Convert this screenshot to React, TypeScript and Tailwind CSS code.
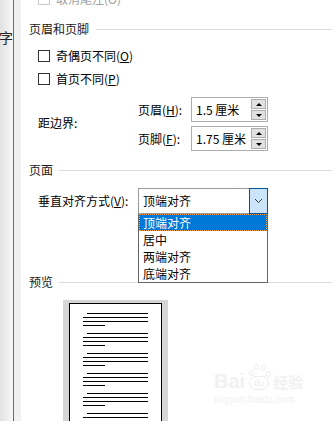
import React from "react";

function Check({ disabled }: { disabled?: boolean }) {
  return (
    <div
      className={
        "w-[12px] h-[12px] border bg-white shrink-0 " +
        (disabled ? "border-[#c8c8c8]" : "border-[#333333]")
      }
    />
  );
}

function Header({ text, gap }: { text: string; gap: string }) {
  return (
    <div className="h-[16px] flex items-center pl-[8px]">
      <span className="text-[12px] leading-[16px] text-[#1a1a1a]">{text}</span>
      <div className={"flex-1 h-px bg-[#dcdcdc] " + gap} />
    </div>
  );
}

function Spin({ value }: { value: string }) {
  return (
    <div className="w-[77px] h-[25px] border border-[#adadad] bg-white flex items-center">
      <span className="flex-1 pl-[4px] text-[12px] leading-[16px] text-black">{value}</span>
      <div className="flex flex-col gap-[1px] mr-[1px]">
        <div className="w-[15px] h-[10px] bg-[#e1e1e1] border border-[#adadad] flex items-center justify-center">
          <div className="w-0 h-0 border-l-[3px] border-r-[3px] border-b-[3px] border-l-transparent border-r-transparent border-b-black" />
        </div>
        <div className="w-[15px] h-[10px] bg-[#e1e1e1] border border-[#adadad] flex items-center justify-center">
          <div className="w-0 h-0 border-l-[3px] border-r-[3px] border-t-[3px] border-l-transparent border-r-transparent border-t-black" />
        </div>
      </div>
    </div>
  );
}

function Group() {
  return (
    <div className="flex flex-col gap-[3px]">
      <div className="h-px bg-black ml-[4px]" />
      <div className="h-px bg-black" />
      <div className="h-px bg-black" />
      <div className="h-px bg-black w-[22px]" />
    </div>
  );
}

export default function App() {
  return (
    <div className="w-[332px] h-[421px] overflow-hidden flex bg-white relative font-['Noto_Sans_CJK_SC','Liberation_Sans',sans-serif] text-[12px]">
      <div className="w-[13px] h-full bg-gradient-to-r from-[#e2e2e2] to-[#f7f7f7] shrink-0" />
      <div className="w-px h-full bg-[#6a6a6a] shrink-0" />
      <div className="w-[7px] h-full bg-[#f0f0f0] shrink-0" />
      <span className="absolute left-[-1px] top-[29px] text-[14px] leading-[16px] text-[#222]">字</span>

      <div className="flex-1 flex flex-col relative">
        {/* partial top row */}
        <div className="h-[14px] mt-[-8px] flex items-center gap-[6px] pl-[17px]">
          <Check disabled />
          <span className="text-[12px] leading-[14px] text-[#a0a0a0]">取消尾注(O)</span>
        </div>

        <div className="mt-[15px]">
          <Header text="页眉和页脚" gap="ml-[7px]" />
        </div>

        <div className="mt-[11px] h-[16px] flex items-center gap-[6px] pl-[17px]">
          <Check />
          <span className="leading-[16px] text-black">
            奇偶页不同(<span className="underline">O</span>)
          </span>
        </div>
        <div className="mt-[7px] h-[16px] flex items-center gap-[6px] pl-[17px]">
          <Check />
          <span className="leading-[16px] text-black">
            首页不同(<span className="underline">P</span>)
          </span>
        </div>

        <div className="mt-[10px] flex items-center">
          <span className="w-[117px] pl-[17px] pb-[3px] leading-[16px] text-black">距边界:</span>
          <div className="flex flex-col gap-[4px]">
            <div className="flex items-center">
              <span className="w-[53px] leading-[16px] text-black">
                页眉(<span className="underline">H</span>):
              </span>
              <Spin value="1.5 厘米" />
            </div>
            <div className="flex items-center">
              <span className="w-[53px] leading-[16px] text-black">
                页脚(<span className="underline">F</span>):
              </span>
              <Spin value="1.75 厘米" />
            </div>
          </div>
        </div>

        <div className="mt-[11px]">
          <Header text="页面" gap="ml-[6px]" />
        </div>

        <div className="mt-[10px] h-[26px] flex items-center relative">
          <span className="w-[117px] pl-[17px] leading-[16px] text-black">
            垂直对齐方式(<span className="underline">V</span>):
          </span>
          <div className="relative w-[130px] h-[26px]">
            <div className="w-full h-full border border-[#9a9a9a] bg-white flex items-center">
              <span className="flex-1 pl-[4px] leading-[16px] text-black">顶端对齐</span>
              <div className="w-[19px] h-[26px] -my-px -mr-px bg-[#cce4f7] border border-[#005499] flex items-center justify-center">
                <svg width="9" height="6" viewBox="0 0 9 6">
                  <path d="M1 1 L4.5 4.5 L8 1" fill="none" stroke="#3a3a3a" strokeWidth="1" />
                </svg>
              </div>
            </div>
            <div className="absolute left-0 top-[26px] w-[130px] bg-white border-x border-b border-[#646464] z-10 flex flex-col">
              <div className="h-[17px] bg-[#0078d7] border border-dotted border-[#f5a040] flex items-center pl-[3px] text-white leading-[15px]">
                顶端对齐
              </div>
              <div className="h-[17px] flex items-center pl-[4px] text-black leading-[16px]">居中</div>
              <div className="h-[17px] flex items-center pl-[4px] text-black leading-[16px]">两端对齐</div>
              <div className="h-[17px] flex items-center pl-[4px] text-black leading-[16px]">底端对齐</div>
            </div>
          </div>
        </div>

        <div className="mt-[60px]">
          <Header text="预览" gap="ml-[6px]" />
        </div>

        <div className="mt-[10px] ml-[42px] w-[105px] h-[200px] bg-[#d6d6d6] px-[6px] pt-[3px]">
          <div className="h-full bg-white border border-black px-[13px] pt-[9px] flex flex-col gap-[7px]">
            <Group />
            <Group />
            <Group />
            <Group />
            <Group />
            <Group />
          </div>
        </div>

        {/* watermark */}
        <div className="absolute left-[193px] top-[364px] flex flex-col items-start pointer-events-none">
          <div className="flex items-end gap-[1px]">
            <span className="text-[20px] leading-[22px] font-bold text-[#f1f1f1] font-['Liberation_Sans',sans-serif]">Bai</span>
            <div className="relative w-[26px] h-[28px]">
              <div className="absolute left-[8px] top-0 w-[5px] h-[6px] rounded-full border border-[#ececec]" />
              <div className="absolute left-[15px] top-[1px] w-[5px] h-[6px] rounded-full border border-[#ececec]" />
              <div className="absolute left-[3px] top-[6px] w-[5px] h-[6px] rounded-full border border-[#ececec]" />
              <div className="absolute left-[20px] top-[7px] w-[5px] h-[6px] rounded-full border border-[#ececec]" />
              <div className="absolute left-[3px] top-[12px] w-[20px] h-[14px] rounded-[8px] border border-[#ececec] flex items-center justify-center text-[9px] leading-[9px] text-[#ececec] font-['Liberation_Sans',sans-serif]">du</div>
            </div>
            <span className="text-[15px] leading-[20px] font-bold text-[#f1f1f1]">经验</span>
          </div>
          <span className="text-[10px] leading-[12px] text-[#f1f1f1] font-['Liberation_Sans',sans-serif] mt-[2px]">jingyan.baidu.com</span>
        </div>
      </div>
    </div>
  );
}
